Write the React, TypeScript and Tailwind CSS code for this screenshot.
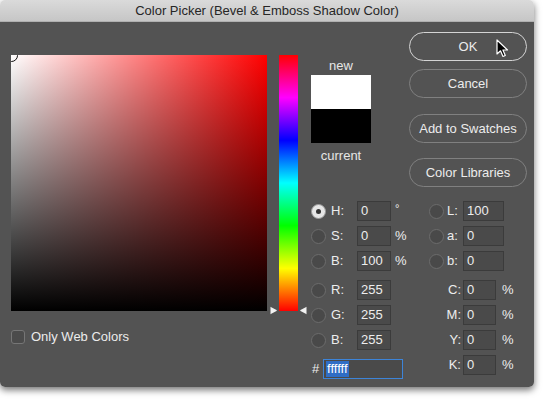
import React from "react";

const font = { fontFamily: '"Liberation Sans", Arial, sans-serif' };

function Radio({ on }: { on?: boolean }) {
  return on ? (
    <span className="w-[15px] h-[15px] rounded-full bg-[#e6e6e6] border border-[#9a9a9a] flex items-center justify-center shrink-0">
      <span className="w-[5px] h-[5px] rounded-full bg-[#333]" />
    </span>
  ) : (
    <span className="w-[15px] h-[15px] rounded-full bg-[#494949] border border-[#6c6c6c] shrink-0" />
  );
}

function Box({ value, w }: { value: string; w: string }) {
  return (
    <div
      className={`${w} h-[20px] bg-[#4a4a4a] border border-[#3b3b3b] text-[13px] leading-[18px] text-[#ededed] pl-[3px]`}
    >
      {value}
    </div>
  );
}

function LeftRow({
  label,
  value,
  unit,
  on,
  className = "",
}: {
  label: string;
  value: string;
  unit?: string;
  on?: boolean;
  className?: string;
}) {
  return (
    <div className={`flex items-center h-[20px] ${className}`}>
      <Radio on={on} />
      <span className="w-[26px] ml-[5px] text-[13px] text-[#ededed]">{label}</span>
      <Box value={value} w="w-[34px]" />
      {unit && (
        <span
          className={`ml-[4px] text-[#ededed] ${unit === "°" ? "text-[11px] -mt-[6px]" : "text-[13px]"}`}
        >
          {unit}
        </span>
      )}
    </div>
  );
}

function LabRow({ label, value, className = "" }: { label: string; value: string; className?: string }) {
  return (
    <div className={`flex items-center h-[20px] ${className}`}>
      <Radio />
      <span className="w-[16px] ml-[3px] text-[13px] text-[#ededed]">{label}</span>
      <Box value={value} w="w-[41px]" />
    </div>
  );
}

function CmykRow({ label, className = "" }: { label: string; className?: string }) {
  return (
    <div className={`flex items-center h-[20px] ${className}`}>
      <span className="w-[34px] pr-[2px] text-right text-[13px] text-[#ededed]">{label}</span>
      <Box value="0" w="w-[33px]" />
      <span className="ml-[6px] text-[13px] text-[#ededed]">%</span>
    </div>
  );
}

function Btn({ children, primary, className = "" }: { children: React.ReactNode; primary?: boolean; className?: string }) {
  return (
    <div
      className={`h-[29px] rounded-full border flex items-center justify-center text-[13px] text-[#ececec] ${
        primary ? "border-[#d4d4d4]" : "border-[#808080]"
      } ${className}`}
    >
      {children}
    </div>
  );
}

export default function App() {
  return (
    <div className="w-[544px] h-[399px] bg-white" style={font}>
      <div className="w-[534px] h-[387px] rounded-[5px] overflow-hidden flex flex-col shadow-[0_3px_7px_rgba(0,0,0,0.55)]">
        <div className="h-[22px] bg-[linear-gradient(to_bottom,#dadada,#c6c6c6)] border-b border-[#b0b0b0] flex items-center justify-center text-[13px] text-[#262626]">
          Color Picker (Bevel &amp; Emboss Shadow Color)
        </div>
        <div className="flex-1 bg-[#535353] flex">
          {/* left: field + hue slider */}
          <div className="w-[311px] pl-[11px] pt-[33px] flex flex-col">
            <div className="flex items-start">
              <div className="relative w-[256px] h-[256px] overflow-hidden bg-[linear-gradient(to_bottom,transparent,#000),linear-gradient(to_right,#fff,#f00)]">
                <div className="absolute -left-[6px] -top-[6px] w-[13px] h-[13px] rounded-full border-[1.5px] border-[#111]" />
              </div>
              <div className="relative ml-[12px]">
                <div className="w-[19px] h-[256px] bg-[linear-gradient(to_bottom,#f00,#f0f,#00f,#0ff,#0f0,#ff0,#f00)]" />
                <svg className="absolute -left-[10px] bottom-[-4px]" width="9" height="9" viewBox="0 0 9 9">
                  <path d="M1.5 1 Q1 0.5 1.8 0.9 L7.5 4 Q8.2 4.5 7.5 5 L1.8 8.1 Q1 8.5 1.5 8 Z" fill="#f2f2f2" />
                </svg>
                <svg className="absolute -right-[10px] bottom-[-4px]" width="9" height="9" viewBox="0 0 9 9">
                  <path d="M7.5 1 Q8 0.5 7.2 0.9 L1.5 4 Q0.8 4.5 1.5 5 L7.2 8.1 Q8 8.5 7.5 8 Z" fill="#f2f2f2" />
                </svg>
              </div>
            </div>
            <div className="flex items-center mt-[16px]">
              <span className="w-[14px] h-[14px] rounded-[3px] border border-[#767676] bg-[#4b4b4b]" />
              <span className="ml-[6px] text-[13px] text-[#ececec]">Only Web Colors</span>
            </div>
          </div>

          {/* right */}
          <div className="flex-1 flex flex-col">
            <div className="h-[179px] flex">
              <div className="w-[60px] pt-[36px] flex flex-col items-center">
                <span className="text-[13px] leading-[15px] text-[#e6e6e6]">new</span>
                <div className="mt-[2px] w-[60px] h-[34px] bg-white" />
                <div className="w-[60px] h-[34px] bg-black" />
                <span className="mt-[5px] text-[13px] leading-[15px] text-[#e6e6e6]">current</span>
              </div>
              <div className="ml-[38px] w-[118px] pt-[10px] flex flex-col relative">
                <Btn primary>OK</Btn>
                <Btn className="mt-[8px]">Cancel</Btn>
                <Btn className="mt-[16px]">Add to Swatches</Btn>
                <Btn className="mt-[15px]">Color Libraries</Btn>
                <svg className="absolute left-[87px] top-[17px]" width="13" height="19" viewBox="0 0 13 19">
                  <path d="M1 1 L1 15 L4.5 11.8 L7 17.5 L9.3 16.5 L6.9 11 L11.5 11 Z" fill="#000" stroke="#fff" strokeWidth="1.2" strokeLinejoin="round" />
                </svg>
              </div>
            </div>
            <div className="flex">
              <div className="w-[118px] flex flex-col">
                <LeftRow label="H:" value="0" unit="°" on />
                <LeftRow label="S:" value="0" unit="%" className="mt-[5px]" />
                <LeftRow label="B:" value="100" unit="%" className="mt-[5px]" />
                <LeftRow label="R:" value="255" className="mt-[9px]" />
                <LeftRow label="G:" value="255" className="mt-[5px]" />
                <LeftRow label="B:" value="255" className="mt-[5px]" />
                <div className="flex items-center h-[20px] mt-[9px]">
                  <span className="w-[12px] pl-[1px] text-[13px] text-[#ededed]">#</span>
                  <div className="w-[80px] h-[20px] border border-[#3d84d8] bg-[#4a4a4a] flex items-center pl-[2px]">
                    <span className="bg-[#2f6dc5] text-white text-[13px] leading-[16px] px-[1px]">ffffff</span>
                  </div>
                </div>
              </div>
              <div className="flex flex-col">
                <LabRow label="L:" value="100" />
                <LabRow label="a:" value="0" className="mt-[5px]" />
                <LabRow label="b:" value="0" className="mt-[5px]" />
                <CmykRow label="C:" className="mt-[9px]" />
                <CmykRow label="M:" className="mt-[5px]" />
                <CmykRow label="Y:" className="mt-[5px]" />
                <CmykRow label="K:" className="mt-[5px]" />
              </div>
            </div>
          </div>
        </div>
      </div>
    </div>
  );
}
